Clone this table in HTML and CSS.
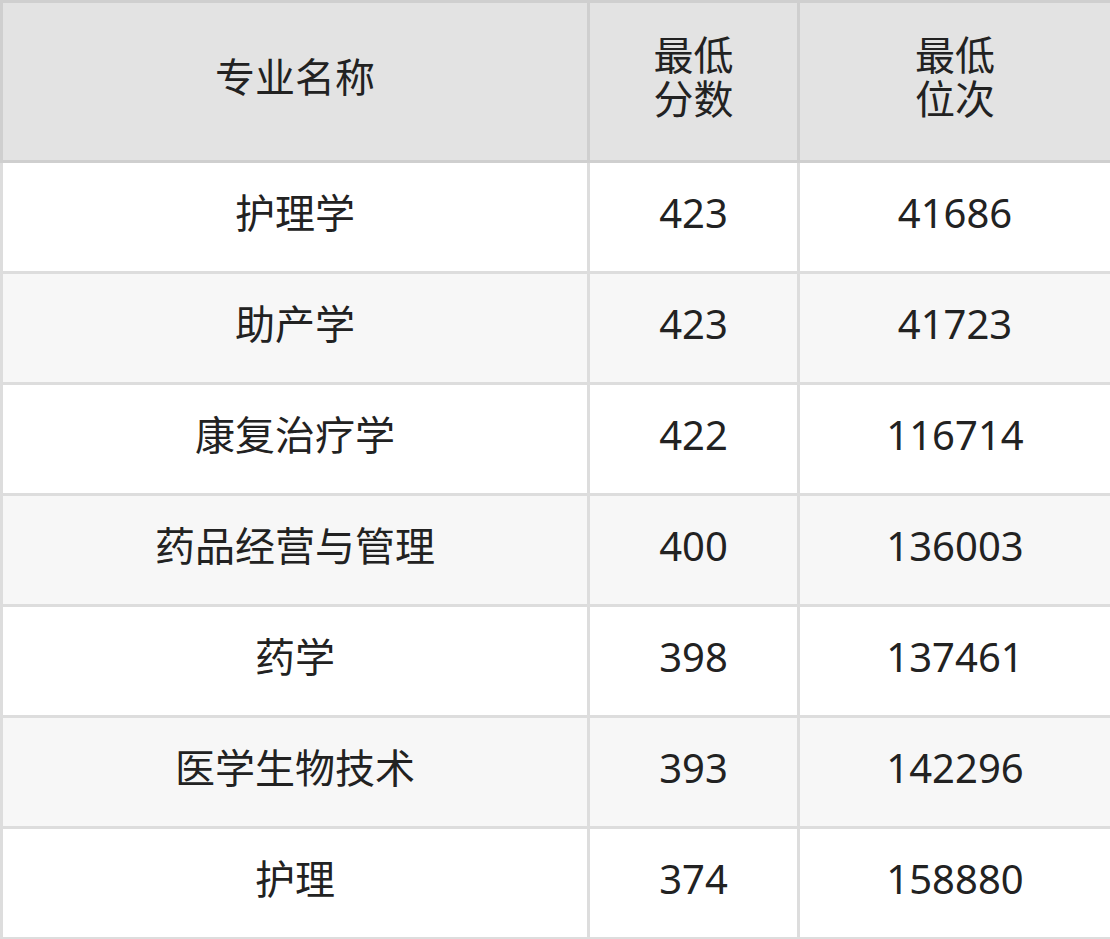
FILE: index.html
```html
<!DOCTYPE html>
<html lang="zh">
<head>
<meta charset="utf-8">
<link rel="stylesheet" href="styles.css">
</head>
<body>
<table class="score-table">
  <colgroup>
    <col class="c1">
    <col class="c2">
    <col class="c3">
  </colgroup>
  <thead>
    <tr>
      <th>专业名称</th>
      <th>最低<br>分数</th>
      <th>最低<br>位次</th>
    </tr>
  </thead>
  <tbody>
    <tr><td>护理学</td><td>423</td><td>41686</td></tr>
    <tr><td>助产学</td><td>423</td><td>41723</td></tr>
    <tr><td>康复治疗学</td><td>422</td><td>116714</td></tr>
    <tr><td>药品经营与管理</td><td>400</td><td>136003</td></tr>
    <tr><td>药学</td><td>398</td><td>137461</td></tr>
    <tr><td>医学生物技术</td><td>393</td><td>142296</td></tr>
    <tr><td>护理</td><td>374</td><td>158880</td></tr>
  </tbody>
</table>
</body>
</html>
```
FILE: styles.css
```css
html, body {
  margin: 0;
  padding: 0;
  background: #ffffff;
}
.score-table {
  width: 1110px;
  border-collapse: collapse;
  table-layout: fixed;
  font-family: "Noto Sans", "Noto Sans CJK SC", sans-serif;
  font-size: 40px;
  color: #222222;
}
.c1 { width: 587px; }
.c2 { width: 210px; }
.c3 { width: 313px; }
.score-table th,
.score-table td {
  border: 3px solid #dddddd;
  text-align: center;
  vertical-align: middle;
  padding: 0;
}
.score-table th {
  background: #e3e3e3;
  border-color: #cfcfcf;
  font-weight: normal;
  height: 147px;
  padding-bottom: 10px;
  line-height: 44px;
}
.score-table td {
  height: 100px;
  padding-bottom: 8px;
  line-height: 44px;
}
.score-table tbody tr:nth-child(even) td {
  background: #f7f7f7;
}
```
